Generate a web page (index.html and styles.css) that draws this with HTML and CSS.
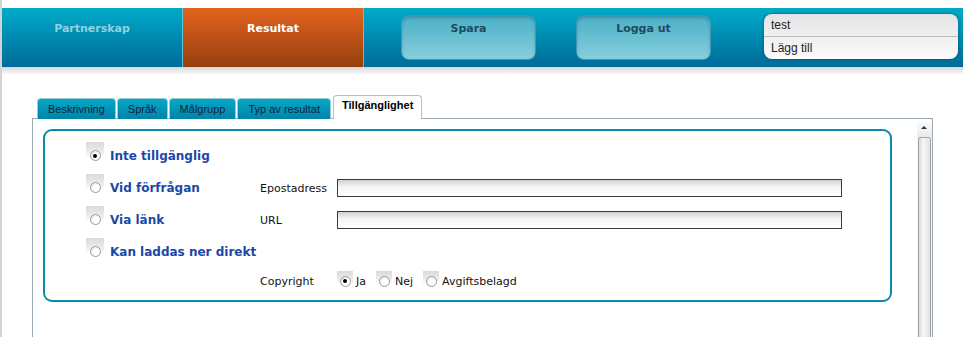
FILE: index.html
```html
<!DOCTYPE html>
<html lang="sv">
<head>
  <meta charset="UTF-8">
  <title>Resultat - Tillgänglighet</title>
  <link rel="stylesheet" href="styles.css">
</head>
<body>

  <header class="topbar">
    <nav class="nav">
      <a href="#" class="nav-item">Partnerskap</a>
      <a href="#" class="nav-item active">Resultat</a>
    </nav>
    <div class="actions">
      <button class="action-btn">Spara</button>
      <button class="action-btn">Logga ut</button>
    </div>
    <div class="userbox">
      <div class="user-row">test</div>
      <div class="user-row">Lägg till</div>
    </div>
  </header>
  <div class="topbar-shadow"></div>

  <main class="main">
    <ul class="tabs">
      <li class="tab">Beskrivning</li>
      <li class="tab">Språk</li>
      <li class="tab">Målgrupp</li>
      <li class="tab">Typ av resultat</li>
      <li class="tab current">Tillgänglighet</li>
    </ul>

    <section class="panel">
      <div class="panel-body">
        <div class="box">
          <div class="row">
            <label class="opt"><span class="radio on"><i></i></span>Inte tillgänglig</label>
          </div>
          <div class="row">
            <label class="opt"><span class="radio"><i></i></span>Vid förfrågan</label>
            <span class="field-label">Epostadress</span>
            <input class="text-input" type="text">
          </div>
          <div class="row">
            <label class="opt"><span class="radio"><i></i></span>Via länk</label>
            <span class="field-label">URL</span>
            <input class="text-input" type="text">
          </div>
          <div class="row">
            <label class="opt"><span class="radio"><i></i></span>Kan laddas ner direkt</label>
          </div>
          <div class="row row-small">
            <span class="opt"></span>
            <span class="field-label">Copyright</span>
            <label class="mini"><span class="radio small on"><i></i></span>Ja</label>
            <label class="mini"><span class="radio small"><i></i></span>Nej</label>
            <label class="mini"><span class="radio small"><i></i></span>Avgiftsbelagd</label>
          </div>
        </div>
      </div>
      <div class="scrollbar">
        <div class="scroll-up"></div>
        <div class="scroll-thumb"></div>
      </div>
    </section>
  </main>

</body>
</html>
```

FILE: styles.css
```css
* { box-sizing: border-box; }
body {
  margin: 0;
  border-left: 2px solid #d3d3d3;
  min-height: 100vh;
  overflow: hidden;
  font-family: "DejaVu Sans", Verdana, sans-serif;
  background: #fff;
  color: #111;
}

/* header */
.topbar {
  margin-top: 8px;
  height: 59px;
  display: flex;
  background: linear-gradient(#00aac8, #006b9b);
}
.nav { display: flex; }
.nav-item {
  width: 181px;
  padding-top: 14px;
  text-align: center;
  font-size: 11px;
  font-weight: bold;
  color: #8fd2e3;
  text-decoration: none;
  border-right: 1px solid #5cc3da;
}
.nav-item.active {
  color: #fff;
  background: linear-gradient(#e2641f, #963f0f);
}
.actions {
  display: flex;
  gap: 40px;
  padding: 7px 0 0 37px;
}
.action-btn {
  width: 135px;
  height: 45px;
  padding: 6px 0 0;
  border: 1px solid #3b9bb6;
  border-radius: 8px;
  background: linear-gradient(#4aafc6, #88cfdc);
  box-shadow: inset 0 2px 3px rgba(0, 60, 90, 0.25);
  font-family: "DejaVu Sans", Verdana, sans-serif;
  font-size: 11px;
  font-weight: bold;
  color: #1d4a5e;
  display: flex;
  justify-content: center;
  align-items: flex-start;
}
.userbox {
  margin: 6px 0 0 53px;
  width: 194px;
  height: 45px;
  border-radius: 8px;
  background: linear-gradient(#e4e4e4, #fbfbfb);
  box-shadow: 0 0 3px rgba(0, 40, 70, 0.6);
  font-family: "Liberation Sans", Arial, sans-serif;
  font-size: 12px;
  color: #222;
}
.user-row {
  height: 22px;
  padding: 4px 0 0 7px;
}
.user-row + .user-row {
  border-top: 1px solid #bdbdbd;
}
.topbar-shadow {
  height: 8px;
  background: linear-gradient(#d6d6d6, #fff);
}

/* tabs */
.main {
  margin: 20px 0 0 30px;
  width: 901px;
}
.tabs {
  list-style: none;
  margin: 0 0 -1px 5px;
  padding: 0;
  display: flex;
  align-items: flex-end;
  position: relative;
  z-index: 1;
}
.tab {
  height: 21px;
  margin-right: 1px;
  padding: 4px 10px 0;
  border: 1px solid #9cc;
  border-bottom: none;
  border-radius: 4px 4px 0 0;
  background: linear-gradient(#06a7c5, #0083a9);
  font-family: "Liberation Sans", Arial, sans-serif;
  font-size: 11px;
  color: #10253a;
}
.tab.current {
  height: 24px;
  margin-left: 1px;
  padding: 3px 8px 0;
  border-color: #b5bec6;
  background: #fff;
  font-weight: bold;
  color: #000;
}

/* panel */
.panel {
  display: flex;
  min-height: 240px;
  border: 1px solid #9aa9b4;
  border-bottom: none;
}
.panel-body {
  flex: 1;
  padding: 10px 24px 0 10px;
}
.box {
  width: 849px;
  height: 173px;
  padding: 9px 0 0 41px;
  border: 2px solid #0b8aac;
  border-radius: 9px;
}
.row {
  height: 32px;
  display: flex;
  align-items: center;
}
.row-small { height: 26px; }
.opt {
  width: 174px;
  display: flex;
  align-items: center;
  gap: 6px;
  font-size: 12px;
  font-weight: bold;
  color: #1b48a7;
}
.field-label {
  width: 77px;
  font-size: 11px;
  color: #111;
}
.text-input {
  width: 505px;
  height: 18px;
  border: 1px solid #3a3a3a;
  background: linear-gradient(#cfcfcf, #f6f6f6 45%, #fff);
}

/* radios */
.radio {
  width: 18px;
  height: 20px;
  margin-top: -8px;
  padding-bottom: 1px;
  display: flex;
  align-items: flex-end;
  justify-content: center;
  background: linear-gradient(#d9d9d9, #efefef 55%, rgba(255,255,255,0) 75%);
}
.radio i {
  width: 11px;
  height: 11px;
  border: 1px solid #9a9a9a;
  border-radius: 50%;
  background: radial-gradient(circle at 60% 60%, #fff 40%, #ddd);
  display: flex;
  align-items: center;
  justify-content: center;
}
.radio.on i::after {
  content: "";
  width: 4px;
  height: 4px;
  border-radius: 50%;
  background: #000;
}
.radio.small { width: 16px; height: 17px; margin-top: -4px; }
.mini {
  display: flex;
  align-items: center;
  gap: 3px;
  margin-right: 10px;
  font-size: 11px;
  color: #111;
}

/* scrollbar */
.scrollbar {
  width: 15px;
  display: flex;
  flex-direction: column;
  background: #f3f3f3;
}
.scroll-up {
  height: 18px;
  position: relative;
  background: linear-gradient(#fdfdfd, #eaeaea);
}
.scroll-up::after {
  content: "";
  position: absolute;
  left: 4px;
  top: 7px;
  border: 3px solid transparent;
  border-bottom: 3px solid #333;
  border-top: none;
}
.scroll-thumb {
  flex: 1;
  margin: 0 1px;
  border: 1px solid #a4a4a4;
  border-radius: 2px;
  background: linear-gradient(90deg, #d9d9d9, #f7f7f7 40%, #e2e2e2);
}
```
